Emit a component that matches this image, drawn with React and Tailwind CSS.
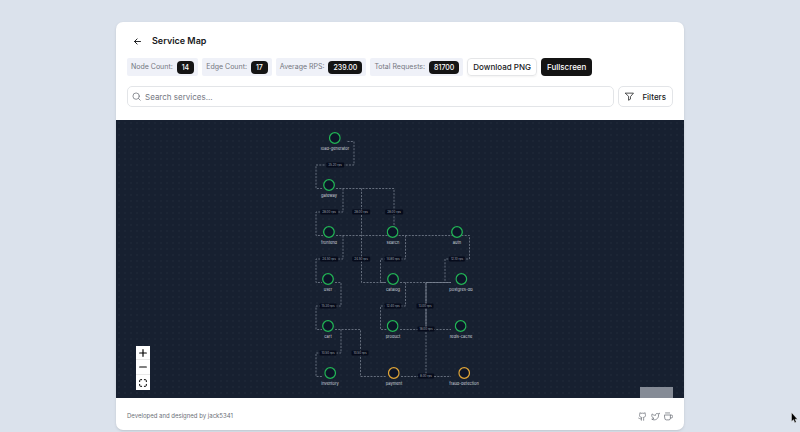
import React from 'react';

const GREEN = '#22b455';
const AMBER = '#dfa437';

const stats = [
  ['Node Count:', '14'],
  ['Edge Count:', '17'],
  ['Average RPS:', '239.00'],
  ['Total Requests:', '81700'],
];

const nodes = [
  ['load-generator', 219, 18, GREEN],
  ['gateway', 213, 65, GREEN],
  ['frontend', 213, 112, GREEN],
  ['search', 277, 112, GREEN],
  ['auth', 341, 112, GREEN],
  ['user', 212, 159, GREEN],
  ['catalog', 277, 159, GREEN],
  ['postgres-db', 345, 159, GREEN],
  ['cart', 212, 206, GREEN],
  ['product', 277, 206, GREEN],
  ['redis-cache', 345, 206, GREEN],
  ['inventory', 214, 253, GREEN],
  ['payment', 278, 253, AMBER],
  ['fraud-detection', 348, 253, AMBER],
];

const edgePaths = [
  'M231.5 21.5H238V45H200V68.5H206',
  'M220 68.5H278V107',
  'M227 68.5V92H200V115.5H207',
  'M245.5 68.5V162.5H270',
  'M220 115.5H353.5V139H329V162.5',
  'M227 115.5V139H200V162.5H206',
  'M289.5 115.5V139H264.5V162.5H270',
  'M219 162.5H225V186H200V209.5H206',
  'M284 162.5H335',
  'M289.5 162.5V186H264.5V209.5H271',
  'M310 162.5V256.5',
  'M219 209.5H244.5V256.5H271',
  'M225 209.5V233H200V256.5H207',
  'M284 209.5H335',
  'M285 256.5H335',
];

const edgeLabels = [
  ['35.20 rps', 219, 45],
  ['28.00 rps', 213, 92],
  ['28.00 rps', 245, 92],
  ['28.00 rps', 278, 92],
  ['24.50 rps', 213, 139],
  ['24.50 rps', 245, 139],
  ['14.80 rps', 277, 139],
  ['12.10 rps', 341, 139],
  ['15.30 rps', 212, 186],
  ['12.40 rps', 277, 186],
  ['13.00 rps', 309, 186],
  ['18.00 rps', 310, 209],
  ['10.50 rps', 212, 233],
  ['10.50 rps', 244, 233],
  ['8.00 rps', 310, 256],
];

function Stroke({ className, width = 2, children }) {
  return (
    <svg className={className} viewBox="0 0 24 24" fill="none" stroke="currentColor" strokeWidth={width} strokeLinecap="round" strokeLinejoin="round" aria-hidden="true">
      {children}
    </svg>
  );
}

function Header() {
  return (
    <header className="px-[11px] pt-3 pb-[13px]">
      <div className="flex h-[14px] items-center gap-[9px] pl-[5px]">
        <button type="button" aria-label="Back" className="p-[1px]">
          <Stroke className="size-[9px]" width={2.5}>
            <path d="M20 12H4M11 5l-7 7 7 7" />
          </Stroke>
        </button>
        <h1 className="text-[9px] leading-[14px] font-semibold">Service Map</h1>
      </div>
      <div className="mt-[10px] flex flex-wrap gap-[4px]">
        {stats.map(([label, value]) => (
          <div key={label} className="flex h-[18px] items-center gap-[4px] rounded-[2px] bg-[#eff1f8] px-[4px] text-[7px] text-[#74777f]">
            <span className="leading-[12px]">{label}</span>
            <span className="rounded-[4px] bg-[#141414] px-[5px] font-medium leading-[13px] text-white">{value}</span>
          </div>
        ))}
        <button type="button" className="h-[18px] rounded-[4px] border border-[#e5e6e8] px-[5px] text-[8px] font-medium shadow-xs">Download PNG</button>
        <button type="button" className="h-[18px] rounded-[4px] bg-[#141414] px-[6px] text-[8px] font-medium text-white">Fullscreen</button>
      </div>
      <div className="mt-[10px] flex gap-1">
        <label className="flex h-[21px] min-w-0 flex-1 items-center gap-[4px] rounded-[5px] border border-[#e3e5e8] px-1 text-[#6c7078]">
          <Stroke className="size-[9px] shrink-0">
            <circle cx="11" cy="11" r="8.5" />
            <path d="m17.5 17.5 4.5 4.5" />
          </Stroke>
          <input type="text" aria-label="Search services" placeholder="Search services..." className="min-w-0 flex-1 bg-transparent text-[8px] outline-none placeholder:text-[#74777f]" />
        </label>
        <button type="button" className="flex h-[21px] items-center gap-2 rounded-[5px] border border-[#e3e5e8] px-[6px] text-[8px] font-medium">
          <Stroke className="size-[9px]">
            <path d="M1.500 3h21l-8 9.500v6.500l-5 3v-9.500z" />
          </Stroke>
          Filters
        </button>
      </div>
    </header>
  );
}

function ServiceGraph() {
  return (
    <div className="relative h-[278px] w-[568px] shrink-0">
      <svg className="absolute inset-0 size-full" viewBox="0 0 568 278" fill="none" aria-hidden="true">
        <g stroke="#788291" strokeWidth="0.8" strokeDasharray="2 1.300">
          {edgePaths.map((d) => (
            <path key={d} d={d} />
          ))}
        </g>
        <path d="M335 162.500H310V209" stroke="#7e8795" strokeWidth="0.8" />
      </svg>
      {edgeLabels.map(([text, x, y]) => (
        <span key={`${x}-${y}`} className="absolute -translate-x-1/2 -translate-y-1/2 rounded-[1px] bg-[#060b1b] px-[2px] text-[3px] leading-[5px] whitespace-nowrap text-[#a4abb8]" style={{ left: x, top: y }}>
          {text}
        </span>
      ))}
      {nodes.map(([name, x, y, color]) => (
        <div key={name} className="absolute flex -translate-x-1/2 flex-col items-center" style={{ left: x, top: y - 6 }}>
          <svg className="size-[12px]" viewBox="0 0 12 12" aria-hidden="true">
            <circle cx="6" cy="6" r="5.300" fill="#0d1528" stroke={color} strokeWidth="1.300" />
          </svg>
          <span className="mt-[2px] text-[4px] leading-[5px] whitespace-nowrap text-[#d0d5de]">{name}</span>
        </div>
      ))}
    </div>
  );
}

function Controls() {
  return (
    <div className="absolute bottom-[8px] left-[20px] flex flex-col divide-y divide-[#e8e8e8] bg-white text-black">
      <button type="button" aria-label="Zoom in" className="flex h-[14px] w-[14px] items-center justify-center">
        <Stroke className="size-[8px]" width={3.5}><path d="M12 2v20M2 12h20" /></Stroke>
      </button>
      <button type="button" aria-label="Zoom out" className="flex h-[15px] w-[14px] items-center justify-center">
        <Stroke className="size-[8px]" width={3.5}><path d="M2 12h20" /></Stroke>
      </button>
      <button type="button" aria-label="Fit view" className="flex h-[15px] w-[14px] items-center justify-center">
        <Stroke className="size-[8px]" width={3}><path d="M2 8V5a3 3 0 0 1 3-3h3M16 2h3a3 3 0 0 1 3 3v3M22 16v3a3 3 0 0 1-3 3h-3M8 22H5a3 3 0 0 1-3-3v-3" /></Stroke>
      </button>
    </div>
  );
}

function Footer() {
  return (
    <footer className="flex h-8 items-center justify-between px-[11px] pt-[4px] text-[#6c7078]">
      <p className="text-[6px] leading-[10px]">Developed and designed by jack5341</p>
      <div className="flex gap-[4px]">
        <a href="#github" aria-label="GitHub">
          <Stroke className="size-[9px]">
            <path d="M15 22v-4a4.800 4.800 0 0 0-1-3.500c3 0 6-2 6-5.500.08-1.250-.27-2.480-1-3.500.28-1.150.28-2.350 0-3.500 0 0-1 0-3 1.500-2.640-.5-5.360-.5-8 0C6 2 5 2 5 2c-.3 1.150-.3 2.350 0 3.500A5.400 5.400 0 0 0 4 9c0 3.500 3 5.500 6 5.500-.39.490-.68 1.050-.85 1.650-.17.600-.22 1.230-.15 1.850v4M9 18c-4.510 2-5-2-7-2" />
          </Stroke>
        </a>
        <a href="#twitter" aria-label="Twitter">
          <Stroke className="size-[9px]">
            <path d="M22 4s-.7 2.100-2 3.400c1.600 10-9.400 17.300-18 11.600 2.200.1 4.400-.6 6-2C3 15.500.5 9.600 3 5c2.200 2.600 5.600 4.100 9 4-.9-4.200 4-6.600 7-3.800 1.100 0 3-1.200 3-1.200z" />
          </Stroke>
        </a>
        <a href="#coffee" aria-label="Buy a coffee">
          <Stroke className="size-[9px]">
            <path d="M17 8h2a4 4 0 0 1 0 8h-2M2 8h15v9a4 4 0 0 1-4 4H6a4 4 0 0 1-4-4zM4 2.500h11" />
          </Stroke>
        </a>
      </div>
    </footer>
  );
}

export default function App() {
  return (
    <div className="relative min-h-screen bg-[#dbe2ec] pt-[22px] pb-[2px] font-['Inter',sans-serif] text-[#18191b]">
      <main className="mx-auto w-full max-w-[568px] overflow-hidden rounded-[7px] bg-white shadow-sm">
        <Header />
        <section aria-label="Service graph" className="relative flex justify-center overflow-hidden bg-[#172030] bg-[radial-gradient(circle,#1c2636_0.7px,transparent_0.8px)] bg-[size:6px_6px]">
          <ServiceGraph />
          <Controls />
          <div className="absolute right-[11px] bottom-0 h-[11px] w-[33px] bg-[#858b96]" />
        </section>
        <Footer />
      </main>
      <svg className="absolute top-[412px] right-[2px] h-[12px] w-[7px]" viewBox="0 0 7 12" aria-hidden="true">
        <path d="M.5.5v9l2-1.800 1.300 3 1.500-.7-1.300-2.800h2.500z" fill="#000" stroke="#fff" strokeWidth=".4" />
      </svg>
    </div>
  );
}
